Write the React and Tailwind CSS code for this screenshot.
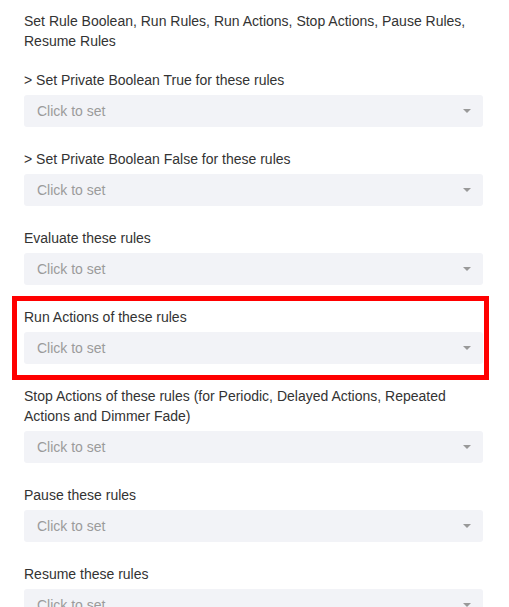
import React from 'react';

// list of rule pickers shown under the header
const sections = [
    { label: '> Set Private Boolean True for these rules' },
    { label: '> Set Private Boolean False for these rules' },
    { label: 'Evaluate these rules' },
    { label: 'Run Actions of these rules', highlight: true },
    { label: 'Stop Actions of these rules (for Periodic, Delayed Actions, Repeated Actions and Dimmer Fade)' },
    { label: 'Pause these rules' },
    { label: 'Resume these rules' },
];

function Picker() {
    return (
        <div className="flex h-[32px] items-center justify-between rounded-[3px] bg-[#f2f3f7] pl-[13px] pr-[12px]">
            <span className="text-[14px] text-[#9b9b9b]">Click to set</span>
            <svg width="8" height="4" viewBox="0 0 8 4">
                <path d="M0 0 L8 0 L4 4 Z" fill="#999999" />
            </svg>
        </div>
    );
}

function Section({ label }) {
    return (
        <div className="flex flex-col gap-[5px]">
            <div className="text-[14px] leading-5 text-[#333333]">{label}</div>
            <Picker />
        </div>
    );
}

export default function App() {
    return (
        <div
            className="h-[607px] overflow-hidden bg-white pl-[24px] pr-[26px] pt-[11px]"
            style={{ fontFamily: '"Liberation Sans", Arial, sans-serif' }}
        >
            <div className="mb-[19px] text-[14px] leading-5 text-[#333333]">
                Set Rule Boolean, Run Rules, Run Actions, Stop Actions, Pause Rules, Resume Rules
            </div>
            <div className="flex flex-col gap-[22px]">
                {sections.map((s) =>
                    s.highlight ? (
                        <div
                            key={s.label}
                            className="-mb-[16px] -ml-[12px] -mr-[6px] -mt-[11px] border-[5px] border-[#ff0000] pb-[11px] pl-[7px] pr-[1px] pt-[6px]"
                        >
                            <Section label={s.label} />
                        </div>
                    ) : (
                        <Section key={s.label} label={s.label} />
                    )
                )}
            </div>
        </div>
    );
}
